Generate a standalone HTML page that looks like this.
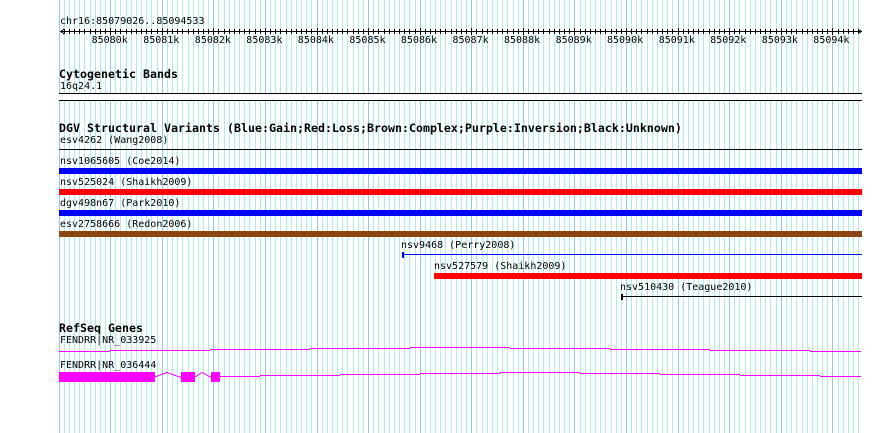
<!DOCTYPE html>
<html><head><meta charset="utf-8"><style>
html,body{margin:0;padding:0;background:#fff;width:890px;height:433px;overflow:hidden}
svg{display:block}
text{font-family:"DejaVu Sans Mono","Liberation Mono",monospace;font-size:10px;fill:#000;white-space:pre}
.b{font-weight:bold;font-size:11.63px}
</style></head><body>
<svg width="890" height="433" viewBox="0 0 890 433" xmlns="http://www.w3.org/2000/svg" shape-rendering="crispEdges">
<defs>
<clipPath id="t"><rect x="60" y="29" width="802" height="5"/></clipPath>
<path id="m" d="M59.5 0V433M64.5 0V433M69.5 0V433M74.5 0V433M79.5 0V433M84.5 0V433M90.5 0V433M95.5 0V433M100.5 0V433M105.5 0V433M110.5 0V433M115.5 0V433M120.5 0V433M126.5 0V433M131.5 0V433M136.5 0V433M141.5 0V433M146.5 0V433M151.5 0V433M157.5 0V433M162.5 0V433M167.5 0V433M172.5 0V433M177.5 0V433M182.5 0V433M188.5 0V433M193.5 0V433M198.5 0V433M203.5 0V433M208.5 0V433M213.5 0V433M218.5 0V433M224.5 0V433M229.5 0V433M234.5 0V433M239.5 0V433M244.5 0V433M249.5 0V433M255.5 0V433M260.5 0V433M265.5 0V433M270.5 0V433M275.5 0V433M280.5 0V433M286.5 0V433M291.5 0V433M296.5 0V433M301.5 0V433M306.5 0V433M311.5 0V433M317.5 0V433M322.5 0V433M327.5 0V433M332.5 0V433M337.5 0V433M342.5 0V433M347.5 0V433M353.5 0V433M358.5 0V433M363.5 0V433M368.5 0V433M373.5 0V433M378.5 0V433M384.5 0V433M389.5 0V433M394.5 0V433M399.5 0V433M404.5 0V433M409.5 0V433M415.5 0V433M420.5 0V433M425.5 0V433M430.5 0V433M435.5 0V433M440.5 0V433M445.5 0V433M451.5 0V433M456.5 0V433M461.5 0V433M466.5 0V433M471.5 0V433M476.5 0V433M482.5 0V433M487.5 0V433M492.5 0V433M497.5 0V433M502.5 0V433M507.5 0V433M513.5 0V433M518.5 0V433M523.5 0V433M528.5 0V433M533.5 0V433M538.5 0V433M543.5 0V433M549.5 0V433M554.5 0V433M559.5 0V433M564.5 0V433M569.5 0V433M574.5 0V433M580.5 0V433M585.5 0V433M590.5 0V433M595.5 0V433M600.5 0V433M605.5 0V433M611.5 0V433M616.5 0V433M621.5 0V433M626.5 0V433M631.5 0V433M636.5 0V433M641.5 0V433M647.5 0V433M652.5 0V433M657.5 0V433M662.5 0V433M667.5 0V433M672.5 0V433M678.5 0V433M683.5 0V433M688.5 0V433M693.5 0V433M698.5 0V433M703.5 0V433M709.5 0V433M714.5 0V433M719.5 0V433M724.5 0V433M729.5 0V433M734.5 0V433M739.5 0V433M745.5 0V433M750.5 0V433M755.5 0V433M760.5 0V433M765.5 0V433M770.5 0V433M776.5 0V433M781.5 0V433M786.5 0V433M791.5 0V433M796.5 0V433M802.5 0V433M807.5 0V433M812.5 0V433M817.5 0V433M822.5 0V433M827.5 0V433M832.5 0V433M838.5 0V433M843.5 0V433M848.5 0V433M853.5 0V433M858.5 0V433"/>
</defs>
<use href="#m" stroke="#a9eded" stroke-width="1" fill="none"/>
<path d="M59.5 0V433M110.5 0V433M162.5 0V433M213.5 0V433M265.5 0V433M317.5 0V433M368.5 0V433M420.5 0V433M471.5 0V433M523.5 0V433M574.5 0V433M626.5 0V433M678.5 0V433M729.5 0V433M781.5 0V433M832.5 0V433" stroke="#8ccbee" fill="none"/>
<!-- ruler -->
<text x="60" y="24">chr16:85079026..85094533</text>
<rect x="60" y="31" width="802" height="1" fill="#000"/>
<use href="#m" stroke="#000" fill="none" clip-path="url(#t)"/>
<path d="M110.5 28V35M162.5 28V35M213.5 28V35M265.5 28V35M317.5 28V35M368.5 28V35M420.5 28V35M471.5 28V35M523.5 28V35M574.5 28V35M626.5 28V35M678.5 28V35M729.5 28V35M781.5 28V35M832.5 28V35" stroke="#000" fill="none"/>
<path d="M64 29L61 31.5L64 34M858 29L861 31.5L858 34" stroke="#000" fill="none"/>
<text x="91.6" y="43">85080k</text>
<text x="143.2" y="43">85081k</text>
<text x="194.8" y="43">85082k</text>
<text x="246.3" y="43">85083k</text>
<text x="297.8" y="43">85084k</text>
<text x="349.4" y="43">85085k</text>
<text x="400.9" y="43">85086k</text>
<text x="452.5" y="43">85087k</text>
<text x="504" y="43">85088k</text>
<text x="555.6" y="43">85089k</text>
<text x="607" y="43">85090k</text>
<text x="658.7" y="43">85091k</text>
<text x="710.2" y="43">85092k</text>
<text x="761.8" y="43">85093k</text>
<text x="813.3" y="43">85094k</text>
<!-- cytobands -->
<text class="b" x="59" y="78">Cytogenetic Bands</text>
<text x="60" y="89">16q24.1</text>
<rect x="59" y="93" width="803" height="8" fill="#fff"/>
<rect x="59" y="93" width="803" height="1" fill="#000"/>
<rect x="59" y="100" width="803" height="1" fill="#000"/>
<!-- DGV -->
<text class="b" x="59" y="132">DGV Structural Variants (Blue:Gain;Red:Loss;Brown:Complex;Purple:Inversion;Black:Unknown)</text>
<text x="60" y="143">esv4262 (Wang2008)</text>
<rect x="59" y="149" width="803" height="1" fill="#000"/>
<text x="60" y="164">nsv1065605 (Coe2014)</text>
<rect x="59" y="168" width="803" height="6" fill="#0000ff"/>
<text x="60" y="185">nsv525024 (Shaikh2009)</text>
<rect x="59" y="189" width="803" height="6" fill="#ff0000"/>
<text x="60" y="206">dgv498n67 (Park2010)</text>
<rect x="59" y="210" width="803" height="6" fill="#0000ff"/>
<text x="60" y="227">esv2758666 (Redon2006)</text>
<rect x="59" y="231" width="803" height="6" fill="#8b4513"/>
<text x="401" y="248">nsv9468 (Perry2008)</text>
<rect x="402" y="254" width="460" height="1" fill="#0000ff"/>
<rect x="402" y="252" width="2" height="6" fill="#0000ff"/>
<text x="434" y="269">nsv527579 (Shaikh2009)</text>
<rect x="434" y="273" width="428" height="6" fill="#ff0000"/>
<text x="620" y="290">nsv510430 (Teague2010)</text>
<rect x="621" y="296" width="241" height="1" fill="#000"/>
<rect x="621" y="294" width="2" height="6" fill="#000"/>
<!-- genes -->
<text class="b" x="59" y="332">RefSeq Genes</text>
<text x="60" y="343">FENDRR|NR_033925</text>
<g fill="#ff00ff">
<rect x="59" y="351" width="51" height="1"/>
<rect x="110" y="350" width="100" height="1"/>
<rect x="210" y="349" width="100" height="1"/>
<rect x="310" y="348" width="100" height="1"/>
<rect x="410" y="347" width="100" height="1"/>
<rect x="510" y="348" width="100" height="1"/>
<rect x="610" y="349" width="100" height="1"/>
<rect x="710" y="350" width="100" height="1"/>
<rect x="810" y="351" width="51" height="1"/>
</g>
<text x="60" y="368">FENDRR|NR_036444</text>
<g fill="#ff00ff">
<rect x="59" y="372" width="96" height="10"/>
<rect x="181" y="372" width="14" height="10"/>
<rect x="211" y="372" width="9" height="10"/>
<rect x="220" y="376" width="40" height="1"/>
<rect x="260" y="375" width="80" height="1"/>
<rect x="340" y="374" width="80" height="1"/>
<rect x="420" y="373" width="80" height="1"/>
<rect x="500" y="372" width="80" height="1"/>
<rect x="580" y="373" width="80" height="1"/>
<rect x="660" y="374" width="80" height="1"/>
<rect x="740" y="375" width="80" height="1"/>
<rect x="820" y="376" width="41" height="1"/>
</g>
<path d="M155 377L167 372.5L181 377.5M195 377L202 372.5L211 377.5" stroke="#ff00ff" fill="none"/>
</svg>
</body></html>
